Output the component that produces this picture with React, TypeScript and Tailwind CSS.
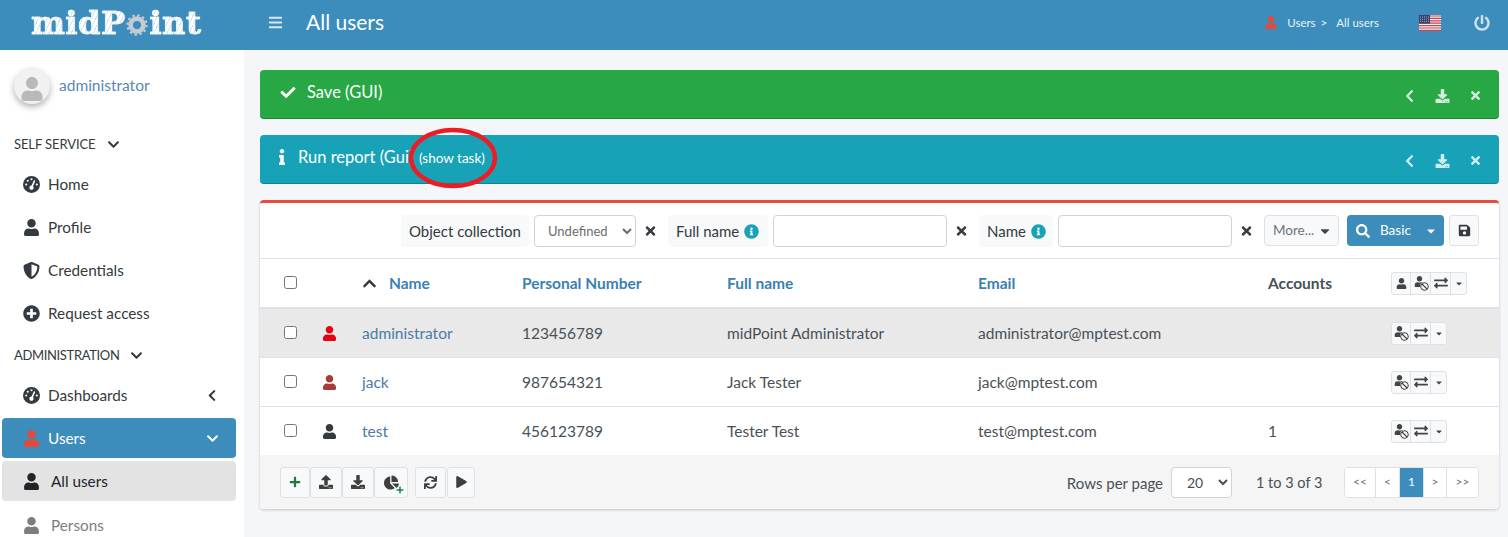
import React from 'react'
import {
  FaBan, FaBars, FaCaretDown, FaChartPie, FaCheck, FaChevronDown, FaChevronLeft, FaDownload, FaExchangeAlt,
  FaInfo, FaInfoCircle, FaPlay, FaPlus, FaPlusCircle, FaPowerOff, FaSave, FaSearch, FaShieldAlt, FaSync,
  FaTimes, FaUpload, FaUser,
} from 'react-icons/fa'
import { FaGaugeHigh } from 'react-icons/fa6'

const font = "font-['Lato','Noto_Sans',sans-serif]"

function Logo() {
  return (
    <div className="flex w-[244px] shrink-0 items-center pb-[4px] pl-[31px] font-['DejaVu_Serif',serif] text-[32px] font-bold leading-none tracking-[0.5px] [-webkit-text-stroke:0.7px_#f4f8fb]">
      <span className="bg-[repeating-linear-gradient(115deg,#ffffff_0,#ffffff_3px,#d3e3ee_3px,#d3e3ee_4px)] bg-clip-text text-transparent">midP</span>
      <svg viewBox="0 0 24 24" className="mx-px mt-1 h-[22px] w-[22px] text-[#c4ccd2]" fill="none" stroke="currentColor">
        <circle cx="12" cy="12" r="7" strokeWidth="5" />
        <circle cx="12" cy="12" r="10.5" strokeWidth="2.4" strokeDasharray="2.6 2.9" />
      </svg>
      <span className="bg-[repeating-linear-gradient(115deg,#ffffff_0,#ffffff_3px,#d3e3ee_3px,#d3e3ee_4px)] bg-clip-text text-transparent">int</span>
    </div>
  )
}

function Flag() {
  return (
    <svg viewBox="0 0 22 16" className="h-4 w-[22px]">
      <rect width="22" height="16" fill="#f3f3f5" />
      <path d="M0 1h22M0 3.4h22M0 5.8h22M0 8.2h22M0 10.6h22M0 13h22M0 15.4h22" stroke="#c8434f" strokeWidth="1.2" />
      <rect width="11" height="8.6" fill="#38406e" />
      <path d="M1 2h9M1 4.2h9M1 6.4h9" stroke="#aeb4cf" strokeWidth="0.9" strokeDasharray="1 1" />
    </svg>
  )
}

function Header() {
  return (
    <header className="flex h-[50px] items-center bg-[#3c8dbc] text-white">
      <Logo />
      <FaBars className="ml-6 mb-[6px] h-[15px] w-[15px] text-[#dbe8f1]" />
      <div className="ml-[23px] pb-[6px] text-[21px]">All users</div>
      <div className="ml-auto flex items-center pb-[5px] text-[11.5px] text-[#e8f1f7]">
        <FaUser className="mr-[10px] h-[13px] w-[12px] text-[#e04b3c]" />
        <span>Users</span>
        <span className="ml-[5px]">&gt;</span>
        <span className="ml-[9px]">All users</span>
        <span className="ml-[40px]"><Flag /></span>
        <FaPowerOff className="ml-[33px] mr-[18px] h-[16px] w-[16px] text-[#cfe1ec]" />
      </div>
    </header>
  )
}

function SectionTitle({ label, className }: { label: string; className?: string }) {
  return (
    <div className={`flex h-[21px] items-center gap-[11px] pl-[14px] text-[13px] text-[#343a40] ${className ?? ''}`}>
      {label}
      <FaChevronDown className="h-[13px] w-[13px]" />
    </div>
  )
}

function NavItem({ icon, label, right }: { icon: React.ReactNode; label: string; right?: React.ReactNode }) {
  return (
    <div className="flex h-[43px] items-center pl-[23px] pr-[27px] text-[15.3px] text-[#343a40]">
      <span className="flex w-[25px] shrink-0 justify-start text-[17px]">{icon}</span>
      {label}
      {right && <span className="ml-auto">{right}</span>}
    </div>
  )
}

function Sidebar() {
  return (
    <aside className="w-[244px] shrink-0 bg-white">
      <div className="flex h-[72px] items-center pl-[14px]">
        <div className="flex h-[36px] w-[36px] items-end justify-center overflow-hidden rounded-full bg-[#f1f1f1] shadow-[0_3px_6px_rgba(0,0,0,0.3)]">
          <FaUser className="mb-[3px] h-[24px] w-[24px] text-[#b9b9b9]" />
        </div>
        <span className="ml-[9px] text-[15.5px] text-[#5a87b8]">administrator</span>
      </div>
      <SectionTitle label="SELF SERVICE" className="mt-[12px] mb-[8px] tracking-[-0.1px]" />
      <NavItem icon={<FaGaugeHigh />} label="Home" />
      <NavItem icon={<FaUser />} label="Profile" />
      <NavItem icon={<FaShieldAlt />} label="Credentials" />
      <NavItem icon={<FaPlusCircle />} label="Request access" />
      <SectionTitle label="ADMINISTRATION" className="mt-[10px] mb-[8px] tracking-[-0.35px]" />
      <NavItem icon={<FaGaugeHigh />} label="Dashboards" right={<FaChevronLeft className="h-[13px] w-[10px]" />} />
      <div className="ml-[2px] mr-[8px] mt-px flex h-[40px] items-center rounded-[4px] bg-[#3c8dbc] pl-[21px] pr-[17px] text-[15.3px] text-white">
        <FaUser className="mr-[8px] h-[17px] w-[17px] text-[#e04b3c]" />
        Users
        <FaChevronDown className="ml-auto h-[13px] w-[13px]" />
      </div>
      <div className="ml-[2px] mr-[8px] mt-[3px] flex h-[40px] items-center rounded-[4px] bg-[#e3e3e3] pl-[21px] text-[15.3px] text-[#212529]">
        <FaUser className="mr-[11px] h-[17px] w-[17px]" />
        All users
      </div>
      <div className="ml-[2px] mt-[4px] flex h-[40px] items-center pl-[21px] text-[15.3px] text-[#7d7d7d]">
        <FaUser className="mr-[11px] h-[17px] w-[17px]" />
        Persons
      </div>
    </aside>
  )
}

function Alert({ color, icon, children }: { color: string; icon: React.ReactNode; children: React.ReactNode }) {
  return (
    <div className={`flex h-[49px] items-center rounded-[4px] pr-[18px] text-[16.5px] text-white shadow-[inset_0_-1px_0_rgba(0,0,0,0.2)] ${color}`}>
      <div className="flex items-center pb-[5px]">
        <span className="flex w-[37px] justify-end">{icon}</span>
        {children}
      </div>
      <div className="ml-auto flex items-center gap-[20px] pt-[2px] text-white/80">
        <FaChevronLeft className="mr-px h-[14px] w-[9px]" />
        <FaDownload className="h-[14px] w-[15px]" />
        <FaTimes className="h-[13px] w-[11px]" />
      </div>
    </div>
  )
}

function FilterLabel({ label, info, className }: { label: string; info?: boolean; className: string }) {
  return (
    <div className={`flex h-[32px] items-center gap-[5px] rounded-[4px] bg-[#f8f9fa] pl-[8px] pt-px text-[15px] text-[#343a40] ${className}`}>
      {label}
      {info && <FaInfoCircle className="h-[15px] w-[15px] text-[#17a2b8]" />}
    </div>
  )
}

function Clear() {
  return <FaTimes className="ml-[9px] mr-[12px] h-[14px] w-[11px] text-[#343a40]" />
}

function FilterBar() {
  return (
    <div className="flex h-[56px] items-center justify-end border-b border-[#dee2e6] pr-[20px]">
      <FilterLabel label="Object collection" className="w-[128px]" />
      <select className="ml-[5px] h-[32px] w-[102px] rounded-[4px] border border-[#ced4da] bg-white pl-[9px] text-[13px] text-[#6c6c6c]">
        <option>Undefined</option>
      </select>
      <Clear />
      <FilterLabel label="Full name" info className="w-[100px]" />
      <input className="ml-[5px] h-[32px] w-[174px] rounded-[4px] border border-[#ced4da] bg-white" />
      <Clear />
      <FilterLabel label="Name" info className="w-[74px]" />
      <input className="ml-[5px] h-[32px] w-[174px] rounded-[4px] border border-[#ced4da] bg-white" />
      <Clear />
      <div className="flex h-[31px] w-[75px] items-center justify-between rounded-[4px] border border-[#dee2e6] bg-[#f8f9fa] pl-[8px] pr-[8px] text-[13.5px] text-[#6c757d]">
        More...
        <FaCaretDown className="h-[14px] w-[10px] text-[#444]" />
      </div>
      <div className="ml-[8px] flex h-[31px] w-[97px] items-center rounded-[4px] bg-[#3c8dbc] pl-[9px] text-[13.5px] text-white">
        <FaSearch className="mr-[10px] h-[14px] w-[14px]" />
        Basic
        <FaCaretDown className="ml-auto mr-[9px] h-[12px] w-[8px]" />
      </div>
      <div className="ml-[5px] flex h-[31px] w-[30px] items-center justify-center rounded-[3px] border border-[#dee2e6] bg-[#f8f9fa]">
        <FaSave className="h-[13px] w-[13px] text-[#343a40]" />
      </div>
    </div>
  )
}

function UserBan() {
  return (
    <span className="relative block h-[14px] w-[14px]">
      <FaUser className="h-[11px] w-[11px] text-[#444]" />
      <FaBan className="absolute bottom-[-1px] right-[-1px] h-[9px] w-[9px] rounded-full bg-[#f8f9fa] text-[#444]" />
    </span>
  )
}

function ActionBox({ children, className }: { children: React.ReactNode; className?: string }) {
  return (
    <span className={`flex h-full items-center justify-center border-r border-[#dee2e6] last:border-r-0 ${className ?? ''}`}>{children}</span>
  )
}

function Actions({ withUser }: { withUser?: boolean }) {
  return (
    <div className="flex h-[23px] w-fit items-center rounded-[3px] border border-[#dee2e6] bg-[#f8f9fa] text-[#444]">
      {withUser && <ActionBox className="w-[19px]"><FaUser className="h-[11px] w-[11px]" /></ActionBox>}
      <ActionBox className={withUser ? 'w-[20px]' : 'w-[19px]'}><UserBan /></ActionBox>
      <ActionBox className="w-[20px]"><FaExchangeAlt className="h-[14px] w-[14px]" /></ActionBox>
      <ActionBox className="w-[15px]"><FaCaretDown className="h-[9px] w-[6px]" /></ActionBox>
    </div>
  )
}

const gridCols = 'grid grid-cols-[62px_40px_160px_205px_251px_290px_123px_108px] items-center'

const rows = [
  { name: 'administrator', num: '123456789', full: 'midPoint Administrator', email: 'administrator@mptest.com', acc: '', icon: 'text-[#e60012]', bg: 'bg-[#e9e9e9] border-t-[2px] border-[#dee2e6] h-[50px]' },
  { name: 'jack', num: '987654321', full: 'Jack Tester', email: 'jack@mptest.com', acc: '', icon: 'text-[#a53d38]', bg: 'bg-white border-t border-[#dee2e6] h-[49px]' },
  { name: 'test', num: '456123789', full: 'Tester Test', email: 'test@mptest.com', acc: '1', icon: 'text-[#343a40]', bg: 'bg-white border-t border-[#dee2e6] h-[49px]' },
]

function UsersTable() {
  return (
    <div className="text-[15.5px]">
      <div className={`${gridCols} h-[48px] font-bold text-[#3c7fb1]`}>
        <div className="pb-[2px] pl-[24px]"><input type="checkbox" className="block h-[13px] w-[13px]" /></div>
        <div />
        <div className="flex items-center">
          <FaChevronDown className="h-[15px] w-[15px] rotate-180 text-[#343a40]" />
          <span className="ml-[12px] pt-[2px]">Name</span>
        </div>
        <div className="pt-[2px]">Personal Number</div>
        <div className="pt-[2px]">Full name</div>
        <div className="pt-[2px]">Email</div>
        <div className="pt-[2px] text-[#495057]">Accounts</div>
        <div><Actions withUser /></div>
      </div>
      {rows.map((r) => (
        <div key={r.name} className={`${gridCols} ${r.bg} text-[#495057]`}>
          <div className="pb-[2px] pl-[24px]"><input type="checkbox" className="block h-[13px] w-[13px]" /></div>
          <FaUser className={`h-[15px] w-[15px] ${r.icon}`} />
          <div className="pt-[2px] text-[#4b7aa6]">{r.name}</div>
          <div className="pt-[2px]">{r.num}</div>
          <div className="pt-[2px]">{r.full}</div>
          <div className="pt-[2px]">{r.email}</div>
          <div className="pt-[2px]">{r.acc}</div>
          <div><Actions /></div>
        </div>
      ))}
    </div>
  )
}

function ToolButton({ children, className }: { children: React.ReactNode; className?: string }) {
  return (
    <span className={`relative flex h-[31px] items-center justify-center rounded-[3px] border border-[#dee2e6] bg-[#f8f9fa] text-[#3f3f3f] ${className ?? ''}`}>
      {children}
    </span>
  )
}

function PageItem({ label, active, className }: { label: string; active?: boolean; className: string }) {
  return (
    <span className={`flex h-full items-center justify-center border-r border-[#dee2e6] text-[12px] last:border-r-0 ${active ? 'bg-[#3c8dbc] text-white' : 'bg-white text-[#6c757d]'} ${className}`}>
      {label}
    </span>
  )
}

function Footer() {
  return (
    <div className="flex h-[54px] items-center rounded-b-[4px] bg-[#f5f5f5] pl-[20px] pr-[20px]">
      <ToolButton className="w-[30px]"><FaPlus className="h-[12px] w-[12px] text-[#1c7a3a]" /></ToolButton>
      <ToolButton className="w-[32px]"><FaUpload className="h-[14px] w-[14px]" /></ToolButton>
      <ToolButton className="w-[32px]"><FaDownload className="h-[14px] w-[14px]" /></ToolButton>
      <ToolButton className="w-[34px]">
        <FaChartPie className="h-[15px] w-[15px]" />
        <FaPlus className="absolute bottom-[3px] right-[3px] h-[8px] w-[8px] text-[#0a8a4a]" />
      </ToolButton>
      <ToolButton className="ml-[7px] w-[31px]"><FaSync className="h-[13px] w-[13px]" /></ToolButton>
      <ToolButton className="ml-px w-[28px]"><FaPlay className="h-[12px] w-[11px]" /></ToolButton>
      <span className="ml-auto pt-[2px] text-[15px] text-[#495057]">Rows per page</span>
      <select className="ml-[8px] h-[31px] w-[61px] rounded-[4px] border border-[#ced4da] bg-white pl-[11px] text-[14px] text-[#495057]">
        <option>20</option>
      </select>
      <span className="ml-[24px] w-[64px] whitespace-nowrap pt-[2px] text-[14.5px] text-[#495057]">1 to 3 of 3</span>
      <div className="ml-[24px] flex h-[31px] items-center overflow-hidden rounded-[3px] border border-[#dee2e6]">
        <PageItem label="<<" className="w-[31px]" />
        <PageItem label="<" className="w-[24px]" />
        <PageItem label="1" active className="w-[24px]" />
        <PageItem label=">" className="w-[23px]" />
        <PageItem label=">>" className="w-[31px]" />
      </div>
    </div>
  )
}

export default function App() {
  return (
    <div className={`relative h-[537px] w-[1508px] overflow-hidden bg-[#f4f6f9] ${font}`}>
      <Header />
      <div className="flex h-[487px]">
        <Sidebar />
        <main className="flex-1 pl-[16px] pr-[9px] pt-[20px]">
          <Alert color="bg-[#28a745]" icon={<FaCheck className="h-[15px] w-[18px]" />}>
            <span className="ml-[10px]">Save (GUI)</span>
          </Alert>
          <div className="mt-[16px]">
            <Alert color="bg-[#17a2b8]" icon={<FaInfo className="mr-[11px] h-[16px] w-[8px]" />}>
              <span className="ml-px flex items-baseline">
                <span className="w-[121px] overflow-hidden whitespace-nowrap">Run report (Gui)</span>
                <span className="text-[13.5px]">(show task)</span>
              </span>
            </Alert>
          </div>
          <section className="mt-[16px] rounded-[4px] border-t-[3px] border-[#e74c3c] bg-white shadow-[0_1px_3px_rgba(0,0,0,0.2)]">
            <FilterBar />
            <UsersTable />
            <Footer />
          </section>
        </main>
      </div>
      <svg viewBox="0 0 90 62" className="absolute left-[408px] top-[127px] h-[62px] w-[90px]" fill="none">
        <ellipse cx="45" cy="31" rx="42" ry="28" stroke="#ed1c24" strokeWidth="4.5" />
      </svg>
    </div>
  )
}
